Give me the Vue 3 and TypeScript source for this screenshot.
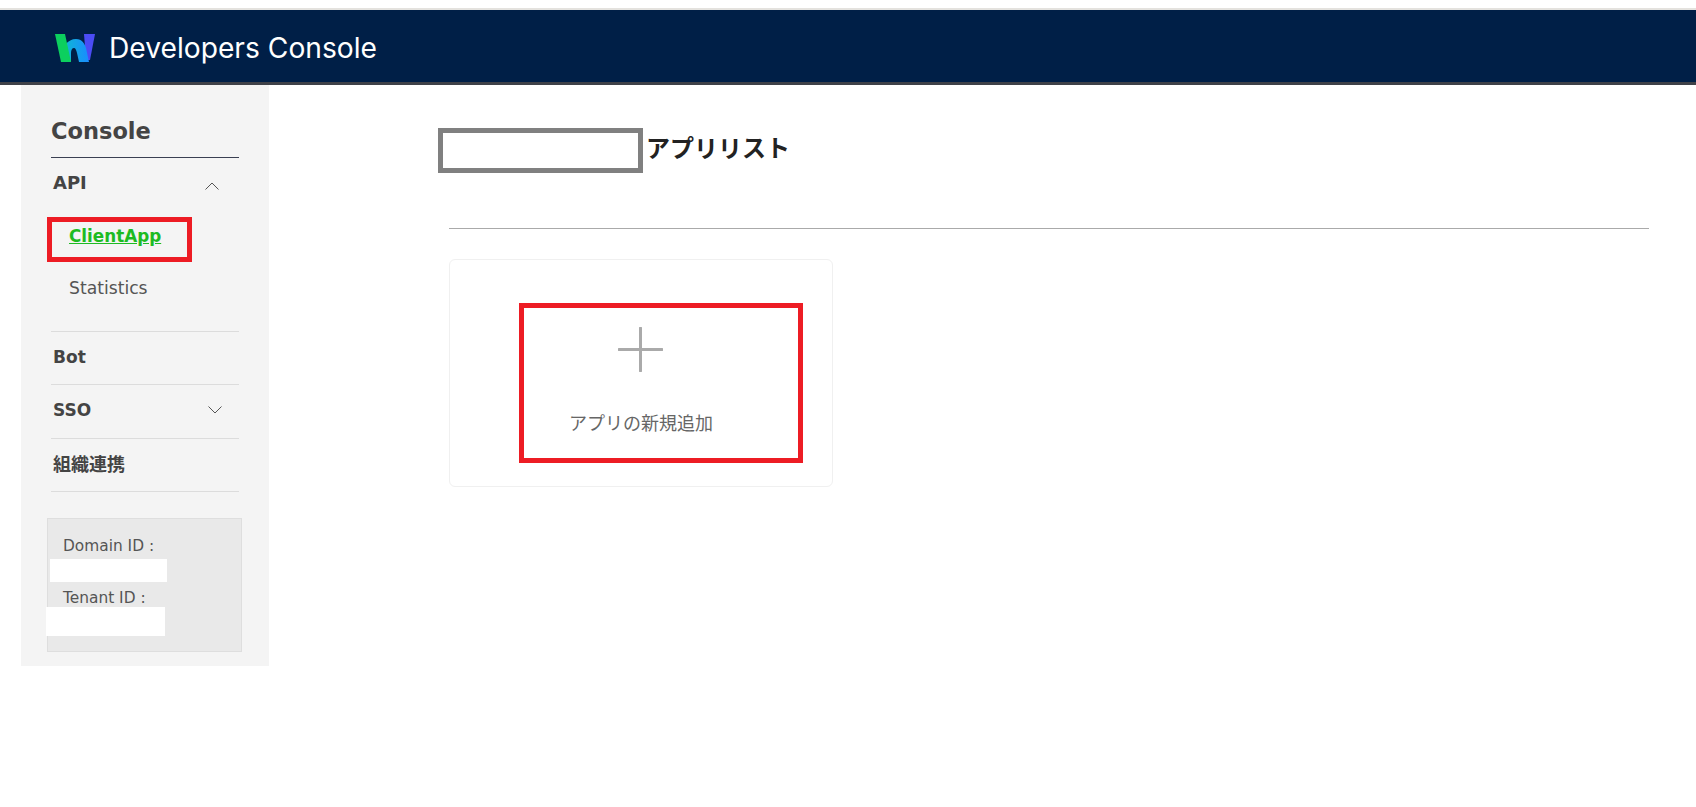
<template>
  <div class="page">
    <header class="topbar">
      <svg class="logo" width="40" height="28" viewBox="0 0 40 28">
        <defs>
          <linearGradient id="arch" x1="0" y1="0" x2="1" y2="0">
            <stop offset="0" stop-color="#0fb4d8" />
            <stop offset="1" stop-color="#1a8cff" />
          </linearGradient>
        </defs>
        <path d="M29 0h11l-5 26h-4z" fill="#4b4cf5" />
        <path d="M15 28L11 10C13 7 17 5 21 5c6 0 9 5 10 9l3 14H24l-2-9c-.7-3-1.5-5-3-5-2 0-3 2-3 5v9z" fill="url(#arch)" />
        <path d="M0 0h10l6 28H6z" fill="#0ccf5e" />
      </svg>
      <span class="brand">Developers Console</span>
    </header>

    <div class="body">
      <aside class="sidebar">
        <h2 class="side-title">Console</h2>
        <section class="group group-api">
          <div class="group-head">
            <span>API</span>
            <svg class="chev chev-up" width="14" height="8" viewBox="0 0 14 8">
              <path d="M.5 7.5L7 1l6.500 6.500" fill="none" stroke="#555" stroke-width="1" />
            </svg>
          </div>
          <a class="sub-link active">ClientApp</a>
          <a class="sub-link">Statistics</a>
        </section>
        <section v-for="item in navItems" :key="item.label" class="group group-row" :class="{ cjk: item.cjk }">
          <span>{{ item.label }}</span>
          <svg v-if="item.hasMenu" class="chev" width="14" height="8" viewBox="0 0 14 8">
            <path d="M.5 .5L7 7l6.500-6.500" fill="none" stroke="#555" stroke-width="1" />
          </svg>
        </section>
        <div class="info-box">
          <div class="info-label">Domain ID :</div>
          <div class="info-value"></div>
          <div class="info-label tenant">Tenant ID :</div>
          <div class="info-value tenant-value"></div>
        </div>
        <div class="mark mark-client"></div>
      </aside>

      <main class="content">
        <div class="title-row">
          <div class="title-mask"></div>
          <h1 class="title">アプリリスト</h1>
        </div>
        <div class="list-wrap">
          <div class="add-card">
            <svg class="plus" width="45" height="45" viewBox="0 0 45 45">
              <path d="M22.5 1v43M1 22.5h43" stroke="#aaa" stroke-width="3" stroke-linecap="round" />
            </svg>
            <div class="add-label">アプリの新規追加</div>
            <div class="mark mark-add"></div>
          </div>
        </div>
      </main>
    </div>
  </div>
</template>

<script setup lang="ts">
interface NavItem {
  label: string
  hasMenu: boolean
  cjk?: boolean
}

const navItems: NavItem[] = [
  { label: 'Bot', hasMenu: false },
  { label: 'SSO', hasMenu: true },
  { label: '組織連携', hasMenu: false, cjk: true }
]
</script>

<style>
html,
body {
  margin: 0;
  background: #fff;
}
</style>

<style scoped>
.page {
  font-family: "DejaVu Sans", "Noto Sans CJK JP", sans-serif;
  color: #444;
  padding-top: 8px;
}

.topbar {
  box-sizing: border-box;
  height: 77px;
  display: flex;
  align-items: center;
  padding: 3px 0 0 55px;
  background: #001f47;
  border-top: 2px solid #e4e2de;
  border-bottom: 3px solid #3f4148;
}

.logo {
  margin-right: 14px;
}

.brand {
  margin-top: 1px;
  font-family: Inter, sans-serif;
  font-size: 28.2px;
  color: #fff;
}

.body {
  display: flex;
  align-items: flex-start;
}

.sidebar {
  position: relative;
  box-sizing: border-box;
  width: 248px;
  height: 581px;
  margin-left: 21px;
  padding: 0 30px;
  background: #f4f4f4;
}

.side-title {
  height: 73px;
  margin: 0;
  padding-top: 28px;
  box-sizing: border-box;
  border-bottom: 1px solid #3a3f52;
  font-size: 22.5px;
  line-height: 36px;
  font-weight: 700;
  color: #444;
}

.group {
  font-size: 17px;
  font-weight: 700;
  border-bottom: 1px solid #dcdcdc;
}

.group-api {
  height: 173px;
}

.group-head {
  display: flex;
  justify-content: space-between;
  padding: 12px 0 0 2px;
  height: 38px;
  line-height: 26px;
  font-size: 18px;
}

.chev {
  margin: 14px 17px 0 0;
}

.chev-up {
  margin: 12px 20px 0 0;
}

.sub-link {
  display: block;
  margin-left: 18px;
  font-size: 17.2px;
  font-weight: 400;
  line-height: 26px;
  color: #555;
}

.sub-link.active {
  margin-top: 15px;
  margin-bottom: 26px;
  font-size: 16.8px;
  font-weight: 700;
  color: #1dbb22;
  text-decoration: underline;
}

.group-row {
  box-sizing: border-box;
  height: 53.4px;
  display: flex;
  justify-content: space-between;
  align-items: center;
  padding: 0 0 3px 2px;
}

.group-row.cjk {
  font-size: 18px;
}

.group-row .chev {
  margin: 0 17px 0 0;
}

.info-box {
  position: relative;
  box-sizing: border-box;
  width: 195px;
  height: 134px;
  margin: 26px 0 0 -4px;
  padding: 14px 15px;
  background: #e9e9e9;
  border: 1px solid #dedede;
  font-size: 15.4px;
  line-height: 26px;
  color: #555;
}

.info-value {
  position: absolute;
  left: 2px;
  top: 40px;
  width: 117px;
  height: 23px;
  background: #fff;
}

.tenant {
  margin-top: 26px;
}

.tenant-value {
  left: -2px;
  top: 88px;
  width: 119px;
  height: 29px;
}

.mark {
  position: absolute;
  box-sizing: border-box;
  border: 5px solid #ed1c24;
}

.mark-client {
  left: 26px;
  top: 132px;
  width: 145px;
  height: 45px;
}

.content {
  flex: 1;
  padding: 43px 47px 0 169px;
}

.title-row {
  display: flex;
  align-items: center;
  height: 45px;
}

.title-mask {
  box-sizing: border-box;
  width: 205px;
  height: 45px;
  border: 5px solid #808080;
}

.title {
  margin: 0 0 3px 3px;
  font-size: 24px;
  font-weight: 700;
  line-height: 36px;
  color: #222;
}

.list-wrap {
  margin: 55px 0 0 11px;
  padding-top: 30px;
  border-top: 1px solid #aaa;
}

.add-card {
  position: relative;
  box-sizing: border-box;
  width: 384px;
  height: 228px;
  display: flex;
  flex-direction: column;
  align-items: center;
  padding-top: 67px;
  border: 1px solid #f0f0f0;
  border-radius: 6px;
}

.plus {
  display: block;
  margin-right: 1px;
}

.add-label {
  margin-top: 39px;
  font-size: 18px;
  line-height: 26px;
  color: #666;
}

.mark-add {
  left: 69px;
  top: 43px;
  width: 284px;
  height: 160px;
}
</style>
